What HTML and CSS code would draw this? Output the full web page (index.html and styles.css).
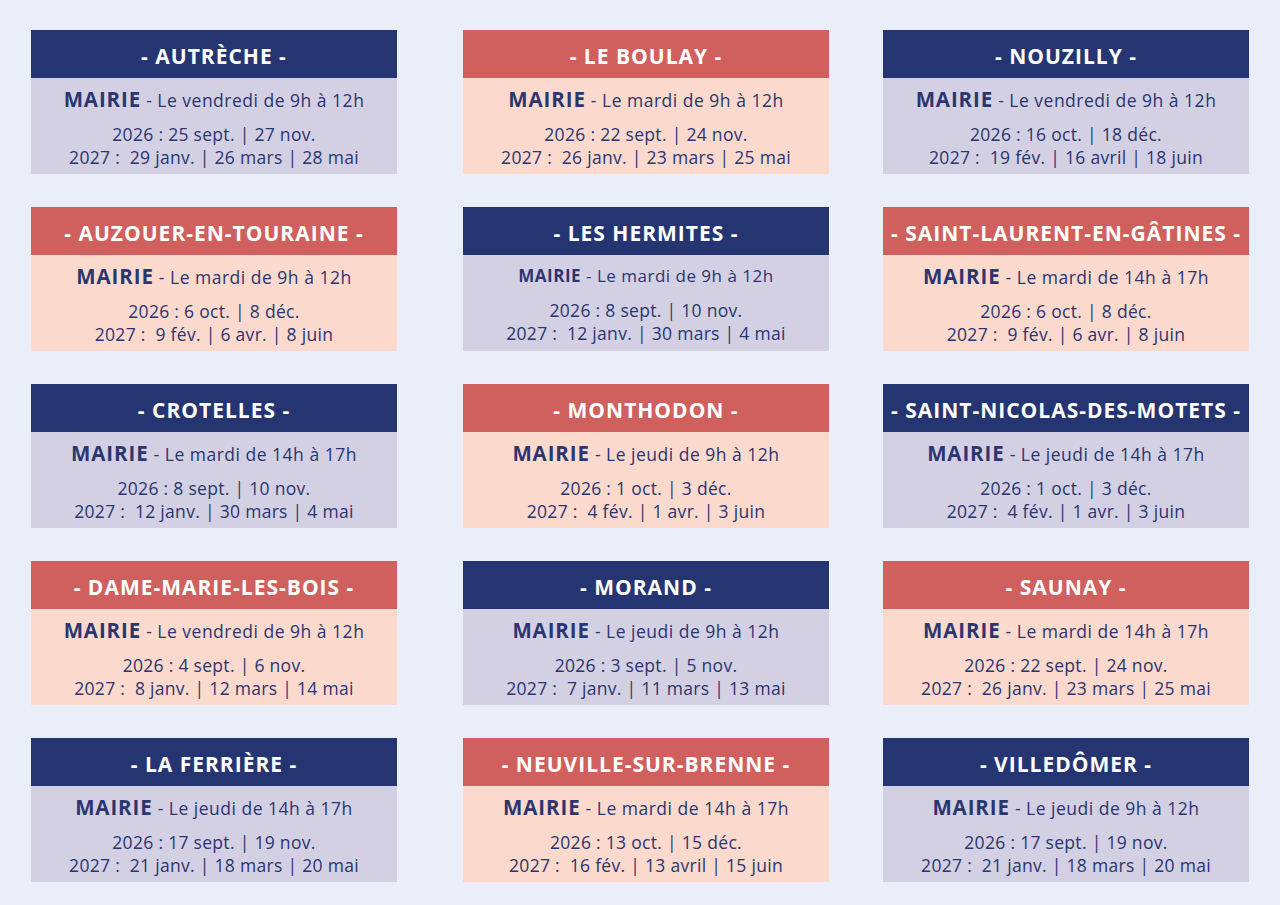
FILE: index.html
```html
<!DOCTYPE html>
<html lang="fr">
<head>
<meta charset="utf-8">
<title>Permanences en mairie</title>
<link rel="stylesheet" href="styles.css">
</head>
<body>
<main class="grid">
  <section class="card navy">
    <h2 class="card-title">- AUTRÈCHE -</h2>
    <div class="card-body">
      <p class="when"><strong>MAIRIE</strong> - Le vendredi de 9h à 12h</p>
      <p class="dates">2026 : 25 sept. | 27 nov.<br>2027 :&nbsp; 29 janv. | 26 mars | 28 mai</p>
    </div>
  </section>
  <section class="card coral">
    <h2 class="card-title">- LE BOULAY -</h2>
    <div class="card-body">
      <p class="when"><strong>MAIRIE</strong> - Le mardi de 9h à 12h</p>
      <p class="dates">2026 : 22 sept. | 24 nov.<br>2027 :&nbsp; 26 janv. | 23 mars | 25 mai</p>
    </div>
  </section>
  <section class="card navy">
    <h2 class="card-title">- NOUZILLY -</h2>
    <div class="card-body">
      <p class="when"><strong>MAIRIE</strong> - Le vendredi de 9h à 12h</p>
      <p class="dates">2026 : 16 oct. | 18 déc.<br>2027 :&nbsp; 19 fév. | 16 avril | 18 juin</p>
    </div>
  </section>

  <section class="card coral">
    <h2 class="card-title">- AUZOUER-EN-TOURAINE -</h2>
    <div class="card-body">
      <p class="when"><strong>MAIRIE</strong> - Le mardi de 9h à 12h</p>
      <p class="dates">2026 : 6 oct. | 8 déc.<br>2027 :&nbsp; 9 fév. | 6 avr. | 8 juin</p>
    </div>
  </section>
  <section class="card navy">
    <h2 class="card-title">- LES HERMITES -</h2>
    <div class="card-body">
      <p class="when small"><strong>MAIRIE</strong> - Le mardi de 9h à 12h</p>
      <p class="dates">2026 : 8 sept. | 10 nov.<br>2027 :&nbsp; 12 janv. | 30 mars | 4 mai</p>
    </div>
  </section>
  <section class="card coral">
    <h2 class="card-title">- SAINT-LAURENT-EN-GÂTINES -</h2>
    <div class="card-body">
      <p class="when"><strong>MAIRIE</strong> - Le mardi de 14h à 17h</p>
      <p class="dates">2026 : 6 oct. | 8 déc.<br>2027 :&nbsp; 9 fév. | 6 avr. | 8 juin</p>
    </div>
  </section>

  <section class="card navy">
    <h2 class="card-title">- CROTELLES -</h2>
    <div class="card-body">
      <p class="when"><strong>MAIRIE</strong> - Le mardi de 14h à 17h</p>
      <p class="dates">2026 : 8 sept. | 10 nov.<br>2027 :&nbsp; 12 janv. | 30 mars | 4 mai</p>
    </div>
  </section>
  <section class="card coral">
    <h2 class="card-title">- MONTHODON -</h2>
    <div class="card-body">
      <p class="when"><strong>MAIRIE</strong> - Le jeudi de 9h à 12h</p>
      <p class="dates">2026 : 1 oct. | 3 déc.<br>2027 :&nbsp; 4 fév. | 1 avr. | 3 juin</p>
    </div>
  </section>
  <section class="card navy">
    <h2 class="card-title">- SAINT-NICOLAS-DES-MOTETS -</h2>
    <div class="card-body">
      <p class="when"><strong>MAIRIE</strong> - Le jeudi de 14h à 17h</p>
      <p class="dates">2026 : 1 oct. | 3 déc.<br>2027 :&nbsp; 4 fév. | 1 avr. | 3 juin</p>
    </div>
  </section>

  <section class="card coral">
    <h2 class="card-title">- DAME-MARIE-LES-BOIS -</h2>
    <div class="card-body">
      <p class="when"><strong>MAIRIE</strong> - Le vendredi de 9h à 12h</p>
      <p class="dates">2026 : 4 sept. | 6 nov.<br>2027 :&nbsp; 8 janv. | 12 mars | 14 mai</p>
    </div>
  </section>
  <section class="card navy">
    <h2 class="card-title">- MORAND -</h2>
    <div class="card-body">
      <p class="when"><strong>MAIRIE</strong> - Le jeudi de 9h à 12h</p>
      <p class="dates">2026 : 3 sept. | 5 nov.<br>2027 :&nbsp; 7 janv. | 11 mars | 13 mai</p>
    </div>
  </section>
  <section class="card coral">
    <h2 class="card-title">- SAUNAY -</h2>
    <div class="card-body">
      <p class="when"><strong>MAIRIE</strong> - Le mardi de 14h à 17h</p>
      <p class="dates">2026 : 22 sept. | 24 nov.<br>2027 :&nbsp; 26 janv. | 23 mars | 25 mai</p>
    </div>
  </section>

  <section class="card navy">
    <h2 class="card-title">- LA FERRIÈRE -</h2>
    <div class="card-body">
      <p class="when"><strong>MAIRIE</strong> - Le jeudi de 14h à 17h</p>
      <p class="dates">2026 : 17 sept. | 19 nov.<br>2027 :&nbsp; 21 janv. | 18 mars | 20 mai</p>
    </div>
  </section>
  <section class="card coral">
    <h2 class="card-title">- NEUVILLE-SUR-BRENNE -</h2>
    <div class="card-body">
      <p class="when"><strong>MAIRIE</strong> - Le mardi de 14h à 17h</p>
      <p class="dates">2026 : 13 oct. | 15 déc.<br>2027 :&nbsp; 16 fév. | 13 avril | 15 juin</p>
    </div>
  </section>
  <section class="card navy">
    <h2 class="card-title">- VILLEDÔMER -</h2>
    <div class="card-body">
      <p class="when"><strong>MAIRIE</strong> - Le jeudi de 9h à 12h</p>
      <p class="dates">2026 : 17 sept. | 19 nov.<br>2027 :&nbsp; 21 janv. | 18 mars | 20 mai</p>
    </div>
  </section>
</main>
</body>
</html>
```
FILE: styles.css
```css
html, body {
  margin: 0;
  padding: 0;
}
body {
  background: #eaeef9;
  font-family: "Open Sans", "Liberation Sans", sans-serif;
  color: #2b3570;
  width: 1280px;
  height: 905px;
  overflow: hidden;
}
.grid {
  display: grid;
  grid-template-columns: 432px 420px 366px;
  grid-auto-rows: 144px;
  row-gap: 33px;
  padding: 30px 0 0 31px;
}
.card {
  width: 366px;
  display: flex;
  flex-direction: column;
}
.card-title {
  margin: 0;
  height: 48px;
  display: flex;
  align-items: center;
  justify-content: center;
  color: #ffffff;
  font-size: 21px;
  font-weight: 700;
  letter-spacing: 1px;
  white-space: nowrap;
  padding-top: 3px;
  box-sizing: border-box;
}
.card-body {
  flex: 1;
  display: flex;
  flex-direction: column;
  align-items: center;
  padding-top: 8px;
  box-sizing: border-box;
}
.navy .card-title { background: #253571; }
.navy .card-body { background: #d3d0e3; }
.coral .card-title { background: #cf605e; }
.coral .card-body { background: #fbdacd; }
.when {
  margin: 0;
  font-size: 17.5px;
  line-height: 26px;
  font-weight: 500;
  white-space: nowrap;
  letter-spacing: 0.5px;
}
.when strong {
  font-size: 20.5px;
  font-weight: 700;
  letter-spacing: 0.9px;
}
.when.small {
  font-size: 17px;
}
.when.small strong {
  font-size: 17px;
  letter-spacing: 0.5px;
}
.dates {
  margin: 10px 0 0;
  font-size: 17.5px;
  line-height: 23px;
  font-weight: 400;
  text-align: center;
  white-space: nowrap;
  letter-spacing: 0.3px;
}
```
